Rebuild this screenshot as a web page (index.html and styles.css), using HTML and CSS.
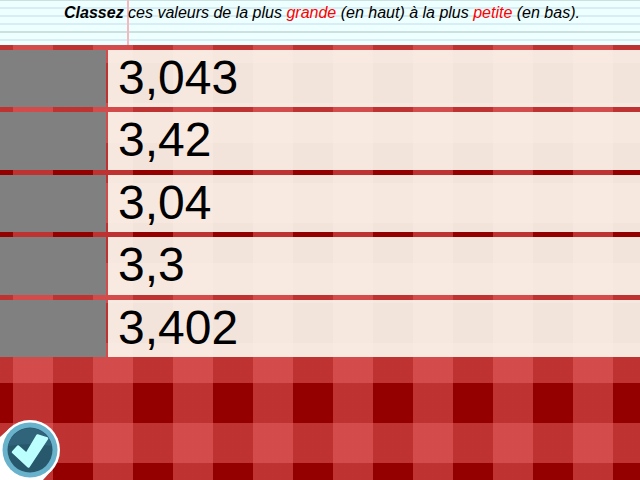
FILE: index.html
```html
<!DOCTYPE html>
<html lang="fr">
<head>
<meta charset="utf-8">
<title>Classez</title>
<link rel="stylesheet" href="styles.css">
</head>
<body>
<header class="paper">
<p class="instruction"><b>Classez</b> ces valeurs de la plus <em>grande</em> (en haut) à la plus <em>petite</em> (en bas).</p>
</header>
<main>
<ol class="list">
<li class="row"><span class="slot"></span><span class="value">3,043</span></li>
<li class="row"><span class="slot"></span><span class="value">3,42</span></li>
<li class="row"><span class="slot"></span><span class="value">3,04</span></li>
<li class="row"><span class="slot"></span><span class="value">3,3</span></li>
<li class="row"><span class="slot"></span><span class="value">3,402</span></li>
</ol>
</main>
<button class="check" type="button" aria-label="Valider">
<svg viewBox="0 0 60 60" width="60" height="60" aria-hidden="true">
<path d="M0 17 L10 8 A30 30 0 0 1 51 51 L43 60 L0 60 Z" fill="#fff"/>
<circle cx="30" cy="30" r="30" fill="#fff"/>
<circle cx="30" cy="30" r="27.500" fill="#68b2cc"/>
<circle cx="30" cy="30" r="22.500" fill="#28586c"/>
<path d="M8 26 A22.500 22.500 0 0 1 52 26 Q30 22 8 26Z" fill="#30647a"/>
<path d="M13 32 L18 26.500 L26.500 34 L37.500 15.500 L47 18.500 L28.500 46.500 Z" fill="#bff" stroke="#bff" stroke-width="2.500" stroke-linejoin="round"/>
</svg>
</button>
</body>
</html>
```
FILE: styles.css
```css
body {
  margin: 0;
  min-height: 100vh;
  font-family: "Liberation Sans", Arial, sans-serif;
  color: #000;
  background-color: #940000;
  background-image:
    linear-gradient(90deg, rgba(232, 100, 100, 0.5) 50%, transparent 50%),
    linear-gradient(rgba(232, 100, 100, 0.5) 50%, transparent 50%);
  background-size: 80px 80px;
  background-position: 13px 23px;
}

.paper {
  height: 45px;
  background-color: #eff;
  background-image:
    linear-gradient(90deg, #f5b8bd, #f5b8bd),
    linear-gradient(#cde0e0 2px, transparent 2px),
    linear-gradient(#d8eef4 2px, transparent 2px);
  background-size: 2px 100%, 100% 32px, 100% 8px;
  background-position: 127px 0, 0 -1px, 0 -1px;
  background-repeat: no-repeat, repeat, repeat;
}

.instruction {
  margin: 0;
  padding: 4px 0 0 4px;
  font-size: 16px;
  line-height: 18px;
  font-style: italic;
  text-align: center;
}

.instruction em {
  color: #f00;
}

.list {
  display: grid;
  grid-auto-rows: 1fr;
  gap: 5px;
  min-height: 307px;
  margin: 0;
  padding: 5px 0 0;
  list-style: none;
}

.row {
  display: grid;
  grid-template-columns: 106px 1fr;
  gap: 2px;
}

.slot {
  background: #808080;
}

.value {
  padding: 0 10px;
  font-size: 48px;
  line-height: 55px;
  background: rgba(251, 247, 238, 0.92);
}

.check {
  position: fixed;
  left: 0;
  bottom: 0;
  padding: 0;
  border: 0;
  background: none;
  cursor: pointer;
}

.check svg {
  display: block;
}
```
